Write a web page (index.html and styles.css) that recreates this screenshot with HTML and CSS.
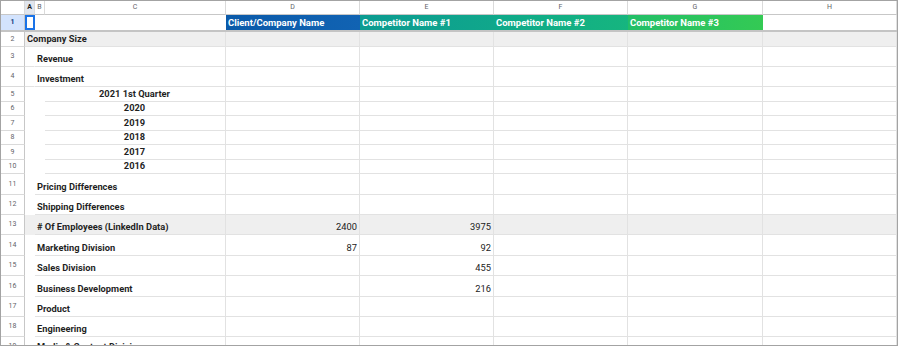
FILE: index.html
```html
<!DOCTYPE html>
<html lang="en">
<head>
    <meta charset="UTF-8">
    <title>Competitor Analysis</title>
    <link rel="stylesheet" href="styles.css">
</head>
<body>
    <div class="sheet">
        <!-- column letters -->
        <div class="row col-head">
            <div class="cell corner"></div>
            <div class="cell letter active">A</div>
            <div class="cell letter">B</div>
            <div class="cell letter">C</div>
            <div class="cell letter">D</div>
            <div class="cell letter">E</div>
            <div class="cell letter">F</div>
            <div class="cell letter">G</div>
            <div class="cell letter">H</div>
        </div>

        <!-- row 1: titles -->
        <div class="row r1">
            <div class="cell num active">1</div>
            <div class="cell selected"></div>
            <div class="cell nb span2 blank"></div>
            <div class="cell title t-client">Client/Company Name</div>
            <div class="cell title t-comp1">Competitor Name #1</div>
            <div class="cell title t-comp2">Competitor Name #2</div>
            <div class="cell title t-comp3">Competitor Name #3</div>
            <div class="cell"></div>
        </div>
        <div class="freeze"></div>

        <div class="row r2 shaded">
            <div class="cell num">2</div>
            <div class="cell span3 label">Company Size</div>
            <div class="cell"></div><div class="cell"></div><div class="cell"></div><div class="cell"></div><div class="cell"></div>
        </div>
        <div class="row h20">
            <div class="cell num">3</div>
            <div class="cell nr"></div>
            <div class="cell span2 label">Revenue</div>
            <div class="cell"></div><div class="cell"></div><div class="cell"></div><div class="cell"></div><div class="cell"></div>
        </div>
        <div class="row h20">
            <div class="cell num">4</div>
            <div class="cell nr"></div>
            <div class="cell span2 label">Investment</div>
            <div class="cell"></div><div class="cell"></div><div class="cell"></div><div class="cell"></div><div class="cell"></div>
        </div>
        <div class="row h15">
            <div class="cell num">5</div>
            <div class="cell nb nr"></div><div class="cell nb nr"></div>
            <div class="cell label center">2021 1st Quarter</div>
            <div class="cell"></div><div class="cell"></div><div class="cell"></div><div class="cell"></div><div class="cell"></div>
        </div>
        <div class="row h14">
            <div class="cell num">6</div>
            <div class="cell nb nr"></div><div class="cell nb nr"></div>
            <div class="cell label center">2020</div>
            <div class="cell"></div><div class="cell"></div><div class="cell"></div><div class="cell"></div><div class="cell"></div>
        </div>
        <div class="row h15">
            <div class="cell num">7</div>
            <div class="cell nb nr"></div><div class="cell nb nr"></div>
            <div class="cell label center">2019</div>
            <div class="cell"></div><div class="cell"></div><div class="cell"></div><div class="cell"></div><div class="cell"></div>
        </div>
        <div class="row h14">
            <div class="cell num">8</div>
            <div class="cell nb nr"></div><div class="cell nb nr"></div>
            <div class="cell label center">2018</div>
            <div class="cell"></div><div class="cell"></div><div class="cell"></div><div class="cell"></div><div class="cell"></div>
        </div>
        <div class="row h15">
            <div class="cell num">9</div>
            <div class="cell nb nr"></div><div class="cell nb nr"></div>
            <div class="cell label center">2017</div>
            <div class="cell"></div><div class="cell"></div><div class="cell"></div><div class="cell"></div><div class="cell"></div>
        </div>
        <div class="row h14">
            <div class="cell num">10</div>
            <div class="cell nb nr"></div><div class="cell nb nr"></div>
            <div class="cell label center">2016</div>
            <div class="cell"></div><div class="cell"></div><div class="cell"></div><div class="cell"></div><div class="cell"></div>
        </div>
        <div class="row h21">
            <div class="cell num">11</div>
            <div class="cell nb nr"></div>
            <div class="cell span2 label">Pricing Differences</div>
            <div class="cell"></div><div class="cell"></div><div class="cell"></div><div class="cell"></div><div class="cell"></div>
        </div>
        <div class="row h20">
            <div class="cell num">12</div>
            <div class="cell nb nr"></div>
            <div class="cell span2 label">Shipping Differences</div>
            <div class="cell"></div><div class="cell"></div><div class="cell"></div><div class="cell"></div><div class="cell"></div>
        </div>
        <div class="row h20 shaded">
            <div class="cell num">13</div>
            <div class="cell nb nr"></div>
            <div class="cell span2 label"># Of Employees (LinkedIn Data)</div>
            <div class="cell value">2400</div><div class="cell value">3975</div><div class="cell"></div><div class="cell"></div><div class="cell"></div>
        </div>
        <div class="row h21">
            <div class="cell num">14</div>
            <div class="cell nb nr"></div>
            <div class="cell span2 label">Marketing Division</div>
            <div class="cell value">87</div><div class="cell value">92</div><div class="cell"></div><div class="cell"></div><div class="cell"></div>
        </div>
        <div class="row h20">
            <div class="cell num">15</div>
            <div class="cell nb nr"></div>
            <div class="cell span2 label">Sales Division</div>
            <div class="cell"></div><div class="cell value">455</div><div class="cell"></div><div class="cell"></div><div class="cell"></div>
        </div>
        <div class="row h21">
            <div class="cell num">16</div>
            <div class="cell nb nr"></div>
            <div class="cell span2 label">Business Development</div>
            <div class="cell"></div><div class="cell value">216</div><div class="cell"></div><div class="cell"></div><div class="cell"></div>
        </div>
        <div class="row h20">
            <div class="cell num">17</div>
            <div class="cell nb nr"></div>
            <div class="cell span2 label">Product</div>
            <div class="cell"></div><div class="cell"></div><div class="cell"></div><div class="cell"></div><div class="cell"></div>
        </div>
        <div class="row h20">
            <div class="cell num">18</div>
            <div class="cell nb nr"></div>
            <div class="cell span2 label">Engineering</div>
            <div class="cell"></div><div class="cell"></div><div class="cell"></div><div class="cell"></div><div class="cell"></div>
        </div>
        <div class="row h20 last">
            <div class="cell num">19</div>
            <div class="cell nb nr"></div>
            <div class="cell span2 label">Media &amp; Content Division</div>
            <div class="cell"></div><div class="cell"></div><div class="cell"></div><div class="cell"></div><div class="cell"></div>
        </div>
    </div>
</body>
</html>
```

FILE: styles.css
```css
/* Basic reset */
* {
    margin: 0;
    padding: 0;
    box-sizing: border-box;
}

body {
    background-color: white;
    font-family: Roboto, "Liberation Sans", Arial, sans-serif;
    color: #1f1f1f;
}

/* Sheet frame */
.sheet {
    width: 898px;
    height: 346px;
    border: 1px solid #a3a3a3;
    overflow: hidden;
    background-color: white;
}

.row {
    display: grid;
    grid-template-columns: 24px 10px 10px 181px 134px 134px 134px 135px 134px;
    height: 20px;
}

.h14 { height: 14px; }
.h15 { height: 15px; }
.h20 { height: 20px; }
.h21 { height: 21px; }

.cell {
    border-right: 1px solid #e2e2e2;
    border-bottom: 1px solid #e2e2e2;
    display: flex;
    align-items: flex-end;
    padding: 0 3px 2px;
    white-space: nowrap;
    font-size: 9.3px;
    line-height: 11px;
    min-width: 0;
}

.nb {
    border-bottom-color: transparent;
}

.nr {
    border-right-color: transparent;
}

.span2 { grid-column: span 2; }
.span3 { grid-column: span 3; }

/* Column letters */
.col-head {
    height: 14px;
}

.col-head .cell {
    border-bottom-color: #c7c7c7;
    border-right-color: #dadada;
    justify-content: center;
    align-items: center;
    padding: 0;
    font-size: 7px;
    color: #5f6368;
}

.col-head .active {
    background-color: #e1e6ee;
    color: #1f1f1f;
    font-weight: bold;
}

/* Row numbers */
.num {
    justify-content: center;
    align-items: center;
    padding: 0;
    font-size: 7px;
    color: #5f6368;
    border-right-color: #c7c7c7;
    border-bottom-color: #dadada;
    background-color: white;
}

.num.active {
    background-color: #d3e3fd;
    color: #0b3a7a;
    font-weight: bold;
}

/* Row 1 */
.r1 {
    height: 15px;
}

.r1 .cell {
    border-bottom: none;
}

.selected {
    border: 2px solid #1a73e8 !important;
    border-bottom: 2px solid #1a73e8 !important;
}

.blank {
    border-right: none;
}

.title {
    color: white;
    font-weight: bold;
    font-size: 9.5px;
    padding: 0 2px 2px;
    border-right: none;
}

.t-client { background: linear-gradient(90deg, #0b5aa9, #1163b3); }
.t-comp1 { background: linear-gradient(90deg, #0b9b91, #10a78b); }
.t-comp2 { background: linear-gradient(90deg, #0ea98a, #16b57f); }
.t-comp3 { background: linear-gradient(90deg, #22bf68, #34ca54); }

.freeze {
    height: 2px;
    background-color: #c4c4c4;
}

/* Row 2 */
.r2 {
    height: 15px;
}

.shaded .cell {
    background-color: #efefef;
}

.shaded .num {
    background-color: white;
}

.label {
    font-weight: bold;
    padding-left: 2px;
}

.last .label {
    padding-bottom: 4px;
}

.center {
    justify-content: center;
}

.value {
    justify-content: flex-end;
    padding-right: 2px;
    color: #222;
}
```
